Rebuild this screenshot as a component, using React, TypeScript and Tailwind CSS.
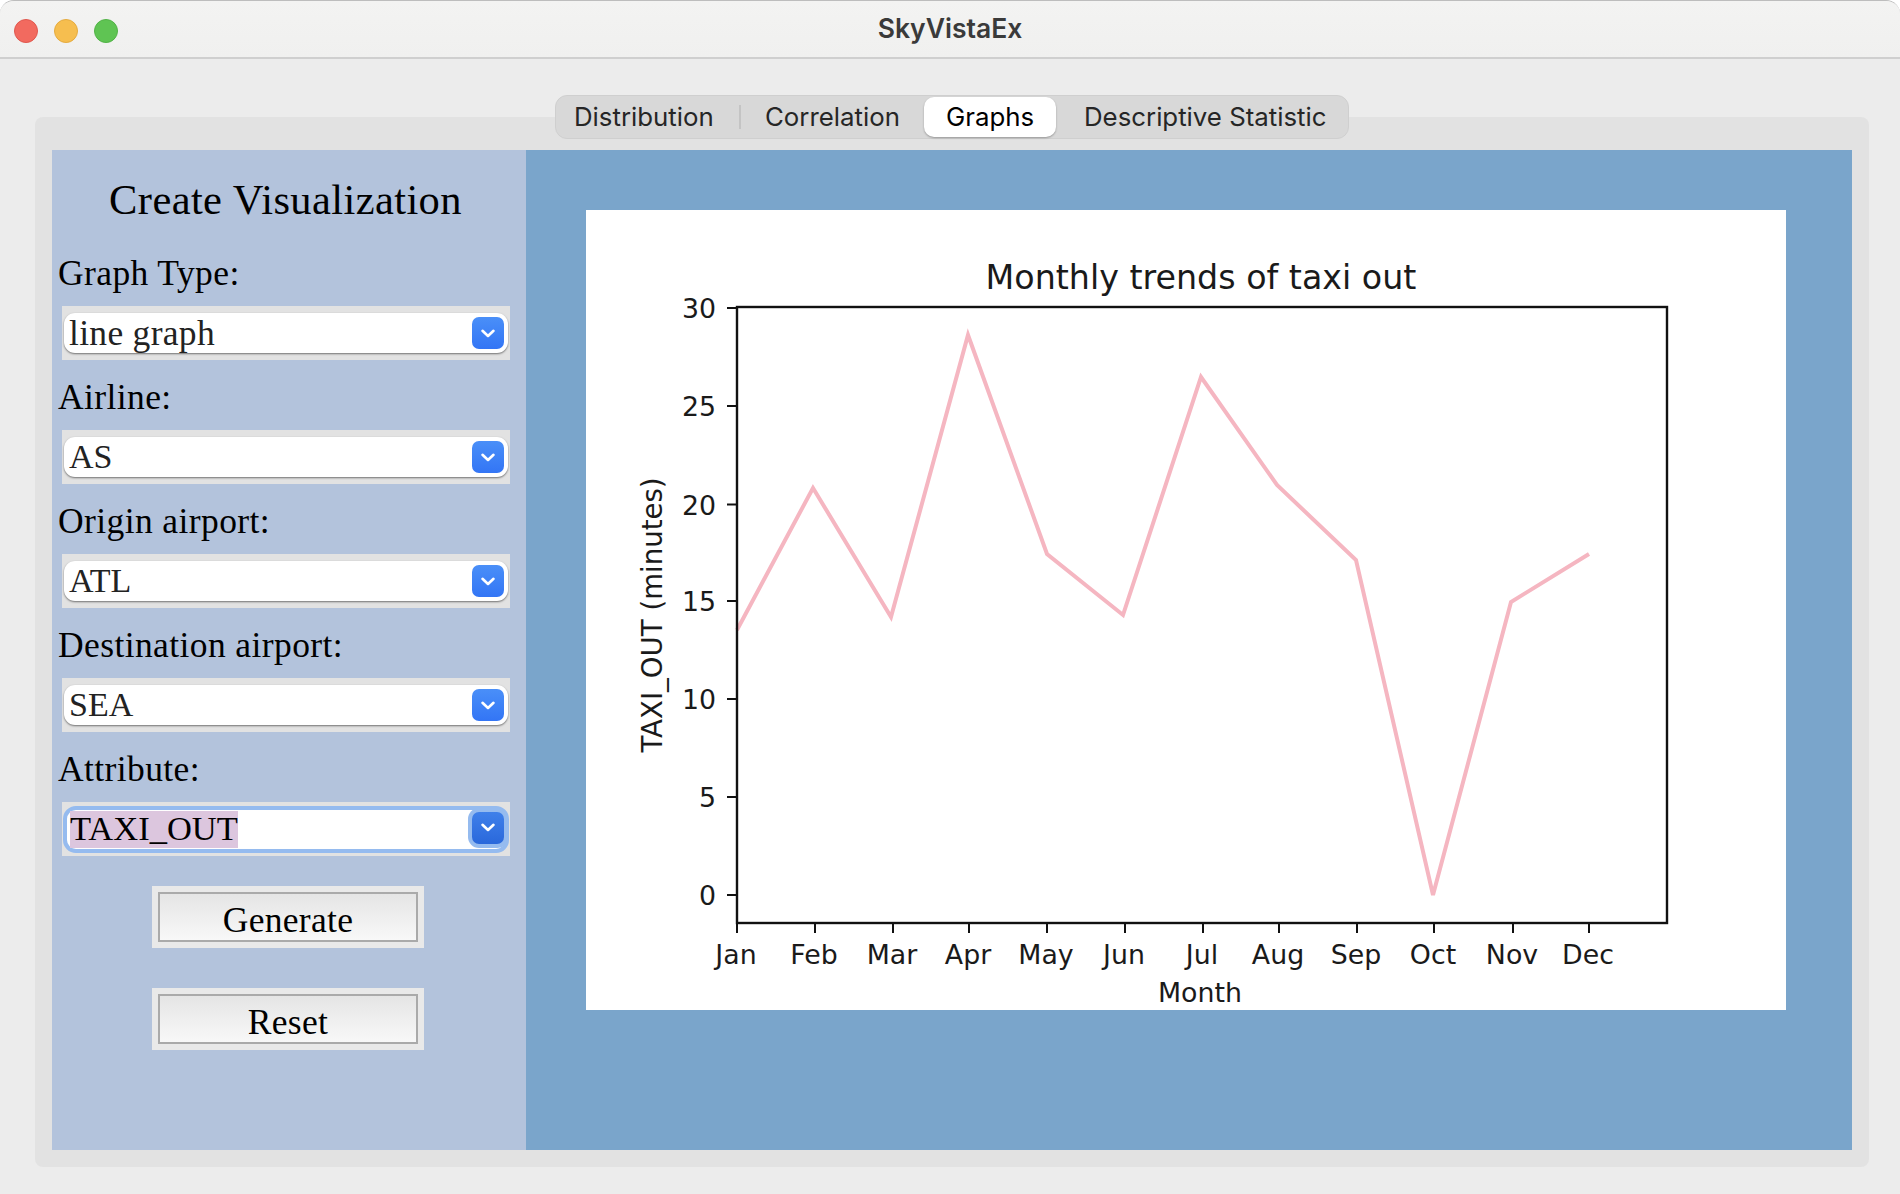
import React from "react";

const serif = "font-['Liberation_Serif',serif]";

function Chevron() {
  return (
    <svg width="16" height="11" viewBox="0 0 16 11" fill="none">
      <path d="M2.5 2.8 L8 8 L13.5 2.8" stroke="white" strokeWidth="2.6" strokeLinecap="round" strokeLinejoin="round" />
    </svg>
  );
}

function Field({ label, value, focused, caps }: { label: string; value: string; focused?: boolean; caps?: boolean }) {
  return (
    <div className="flex flex-col">
      <div className={`h-[70px] flex items-center pl-[6px] pt-[5px] text-[35.5px] tracking-[0.4px] text-black ${serif}`}>{label}</div>
      <div className="h-[54px] ml-[10px] w-[448px] bg-[#e2e2e2] flex items-center justify-center">
        {focused ? (
          <div className="relative w-[446px] h-[47px] bg-white rounded-[13px] border-[4px] border-[#95bbef] flex items-center">
            <span className={`ml-[3px] w-[168px] h-[37px] leading-[35px] whitespace-nowrap bg-[#dcc6de] text-[34.5px] text-black ${serif}`}>{value}</span>
            <div className="absolute right-[-3px] top-[-2px] w-[40px] h-[40px] rounded-[11px] bg-[#95bbef] flex items-center justify-center">
              <div className="w-[32px] h-[32px] rounded-[7px] bg-gradient-to-b from-[#3f80ea] to-[#2a68db] flex items-center justify-center">
                <Chevron />
              </div>
            </div>
          </div>
        ) : (
          <div className="w-[444px] h-[40px] bg-white rounded-[11px] shadow-[0_1px_2px_rgba(0,0,0,0.5)] flex items-center justify-between pr-[4px]">
            <span className={`ml-[5px] ${caps ? "pb-[1px] text-[34px]" : "pt-[1px] text-[35.5px] tracking-[0.3px]"} text-[#222222] ${serif}`}>{value}</span>
            <div className="w-[32px] h-[32px] rounded-[7px] bg-gradient-to-b from-[#4a8ff8] to-[#3375f5] flex items-center justify-center">
              <Chevron />
            </div>
          </div>
        )}
      </div>
    </div>
  );
}

function ActionButton({ label }: { label: string }) {
  return (
    <div className="ml-[100px] w-[272px] h-[62px] bg-[#e9e9e9] flex items-center justify-center">
      <button className={`w-[260px] h-[50px] pb-[4px] border-2 border-[#aaaaaa] bg-gradient-to-b from-[#e5e5e5] to-[#f8f8f8] text-[35.5px] tracking-[0.3px] text-black ${serif}`}>
        {label}
      </button>
    </div>
  );
}

const yTicks = [
  { v: "30", y: 98 },
  { v: "25", y: 196 },
  { v: "20", y: 294.5 },
  { v: "15", y: 391 },
  { v: "10", y: 489 },
  { v: "5", y: 587 },
  { v: "0", y: 685 },
];
const xTicks = [
  ["Jan", 151], ["Feb", 229], ["Mar", 307], ["Apr", 383], ["May", 461], ["Jun", 539],
  ["Jul", 617], ["Aug", 693], ["Sep", 771], ["Oct", 848], ["Nov", 927], ["Dec", 1003],
] as [string, number][];
const linePoints = "151,420 227,278 305,407 382,125 461,344 537,405 615,167 691,275 770,350 847,685 925,392 1003,344";

function Chart() {
  const font = "'DejaVu Sans', sans-serif";
  return (
    <svg width="1200" height="800" viewBox="0 0 1200 800" className="block bg-white">
      <text x="615" y="79" textAnchor="middle" fontFamily={font} fontSize="33.3" fill="#1a1a1a">Monthly trends of taxi out</text>
      <polyline points={linePoints} fill="none" stroke="#f5b6c1" strokeWidth="4" strokeLinejoin="miter" />
      <rect x="151" y="97" width="930" height="616" fill="none" stroke="#111111" strokeWidth="2.4" />
      {yTicks.map((t) => (
        <g key={t.v}>
          <line x1="141" x2="151" y1={t.y} y2={t.y} stroke="#111111" strokeWidth="2" />
          <text x="130" y={t.y + 10} textAnchor="end" fontFamily={font} fontSize="26.8" fill="#1a1a1a">{t.v}</text>
        </g>
      ))}
      {xTicks.map(([m, x]) => (
        <g key={m}>
          <line x1={x} x2={x} y1="713" y2="723" stroke="#111111" strokeWidth="2" />
          <text x={x - 1} y="754" textAnchor="middle" fontFamily={font} fontSize="26.8" fill="#1a1a1a">{m}</text>
        </g>
      ))}
      <text x="614" y="792" textAnchor="middle" fontFamily={font} fontSize="26.8" fill="#1a1a1a">Month</text>
      <text transform="translate(76,405) rotate(-90)" textAnchor="middle" fontFamily={font} fontSize="27.6" fill="#1a1a1a">TAXI_OUT (minutes)</text>
    </svg>
  );
}

export default function App() {
  return (
    <div className="w-[1900px] h-[1194px] bg-white">
      <div className="w-full h-full rounded-t-[14px] overflow-hidden flex flex-col bg-[#ececec] border-t border-[#bdbdbd]">
        <div className="h-[58px] shrink-0 relative bg-gradient-to-b from-[#f3f3f2] to-[#f0f0ef] border-b-2 border-[#cfcfcf] flex items-center justify-center">
          <div className="absolute left-[14px] top-[18px] flex gap-[16px]">
            <div className="w-[24px] h-[24px] rounded-full bg-[#f26a5f] border border-[#e0584e]" />
            <div className="w-[24px] h-[24px] rounded-full bg-[#f6be4f] border border-[#e5ab3f]" />
            <div className="w-[24px] h-[24px] rounded-full bg-[#5fc453] border border-[#52b347]" />
          </div>
          <span className="font-['Inter',sans-serif] font-semibold text-[26.5px] text-[#3a3a3a]">SkyVistaEx</span>
        </div>
        <div className="flex-1 min-h-0 pt-[58px] pl-[35px] pr-[31px] pb-[27px] bg-[#ececec]">
          <div className="relative h-full rounded-[8px] bg-[#e2e2e2] pt-[33px] px-[17px] pb-[17px]">
            <div className="absolute left-1/2 -translate-x-1/2 top-[-22px] w-[794px] h-[44px] rounded-[12px] bg-[#d8d8d8] border border-[#cfcfcf] flex items-center font-['Inter',sans-serif] text-[25.8px] text-[#262626]">
              <span className="ml-[18px] w-[165px]">Distribution</span>
              <div className="w-[2px] h-[24px] bg-[#c4c4c4]" />
              <span className="ml-[24px] w-[159px]">Correlation</span>
              <div className="w-[132px] h-[40px] rounded-[10px] bg-white shadow-[0_1px_2px_rgba(0,0,0,0.3)] flex items-center justify-center text-black">Graphs</div>
              <span className="ml-[28px]">Descriptive Statistic</span>
            </div>
            <div className="h-full flex">
              <div className="w-[474px] h-full bg-[#b3c3dc] flex flex-col">
                <div className={`h-[86px] shrink-0 flex items-center justify-center pr-[7px] pt-[14px] text-[42.5px] tracking-[0.4px] text-black ${serif}`}>
                  Create Visualization
                </div>
                <Field label="Graph Type:" value="line graph" />
                <Field label="Airline:" value="AS" caps />
                <Field label="Origin airport:" value="ATL" caps />
                <Field label="Destination airport:" value="SEA" caps />
                <Field label="Attribute:" value="TAXI_OUT" focused />
                <div className="h-[30px] shrink-0" />
                <ActionButton label="Generate" />
                <div className="h-[40px] shrink-0" />
                <ActionButton label="Reset" />
              </div>
              <div className="flex-1 h-full bg-[#7aa5cb] pt-[60px] pl-[60px]">
                <Chart />
              </div>
            </div>
          </div>
        </div>
      </div>
    </div>
  );
}
